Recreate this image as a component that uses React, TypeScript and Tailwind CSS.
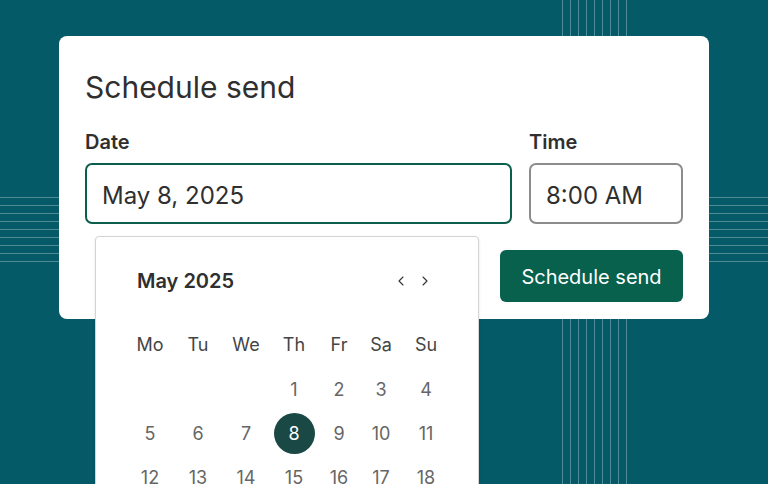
import { ChevronLeft, ChevronRight } from "lucide-react";

const weekDays = ["Mo", "Tu", "We", "Th", "Fr", "Sa", "Su"];

const weeks: (number | null)[][] = [
  [null, null, null, 1, 2, 3, 4],
  [5, 6, 7, 8, 9, 10, 11],
  [12, 13, 14, 15, 16, 17, 18],
];

const lines = [0, 1, 2, 3, 4, 5, 6, 7, 8];

function Calendar() {
  return (
    <div className="absolute left-[10px] top-[108px] w-[384px] h-[300px] bg-white border border-[#d4d4d4] rounded-[4px] shadow-sm">
      <div className="flex items-center justify-between pl-[41px] pr-[45px] pt-[30px]">
        <span className="text-[20px] leading-[28px] font-semibold text-[#2f2f2f]">May 2025</span>
        <div className="flex items-center gap-[8px] text-[#333]">
          <ChevronLeft size={16} strokeWidth={1.6} />
          <ChevronRight size={16} strokeWidth={1.6} />
        </div>
      </div>
      <div className="grid grid-cols-[48px_48px_48px_48px_42px_42px_48px] pl-[30px] mt-[37px] text-[18px] text-[#454545]">
        {weekDays.map((d) => (
          <div key={d} className="h-[26px] leading-[26px] text-center">
            {d}
          </div>
        ))}
      </div>
      <div className="flex flex-col pl-[30px] mt-[9px] text-[18px] text-[#666]">
        {weeks.map((w, i) => (
          <div key={i} className="grid grid-cols-[48px_48px_48px_48px_42px_42px_48px] h-[44px]">
            {w.map((n, j) => (
              <div key={j} className="flex items-center justify-center">
                {n === 8 ? (
                  <span className="w-[41px] h-[41px] rounded-full bg-[#1a4845] text-white flex items-center justify-center">
                    {n}
                  </span>
                ) : (
                  n
                )}
              </div>
            ))}
          </div>
        ))}
      </div>
    </div>
  );
}

export default function App() {
  return (
    <div
      className="relative w-[768px] h-[484px] overflow-hidden bg-[#055a67] pt-[36px] pl-[59px]"
      style={{ fontFamily: "Inter, 'Noto Sans', sans-serif" }}
    >
      {/* background stripes */}
      <div className="absolute top-0 bottom-0 left-[562px] flex gap-[7px]">
        {lines.map((l) => (
          <div key={l} className="w-px h-full bg-white/30" />
        ))}
      </div>
      <div className="absolute left-0 right-0 top-[197px] flex flex-col gap-[7px]">
        {lines.map((l) => (
          <div key={l} className="h-px w-full bg-white/30" />
        ))}
      </div>

      <div className="relative w-[650px] h-[283px] bg-white rounded-[8px] pt-[33px] px-[26px]">
        <h1 className="text-[30px] leading-[36px] font-normal text-[#2f2f2f]">
          Schedule send
        </h1>
        <div className="flex gap-[17px] mt-[23px]">
          <div className="relative flex flex-col w-[427px]">
            <label className="text-[20px] leading-[28px] font-semibold text-[#2f2f2f]">Date</label>
            <div className="mt-[7px] h-[61px] border-2 border-[#0b5e4b] rounded-[7px] flex items-center px-[15px] pt-[5px] text-[24px] text-[#2f2f2f]">
              May 8, 2025
            </div>
            <Calendar />
          </div>
          <div className="flex flex-col w-[154px]">
            <label className="text-[20px] leading-[28px] font-semibold text-[#2f2f2f]">Time</label>
            <div className="mt-[7px] h-[61px] border-2 border-[#8c8c8c] rounded-[7px] flex items-center px-[15px] pt-[5px] text-[24px] text-[#2f2f2f]">
              8:00 AM
            </div>
          </div>
        </div>
        <div className="flex justify-end mt-[26px]">
          <button className="w-[183px] h-[52px] rounded-[6px] bg-[#07614d] text-white text-[20px] pt-[2px]">
            Schedule send
          </button>
        </div>
      </div>
    </div>
  );
}
